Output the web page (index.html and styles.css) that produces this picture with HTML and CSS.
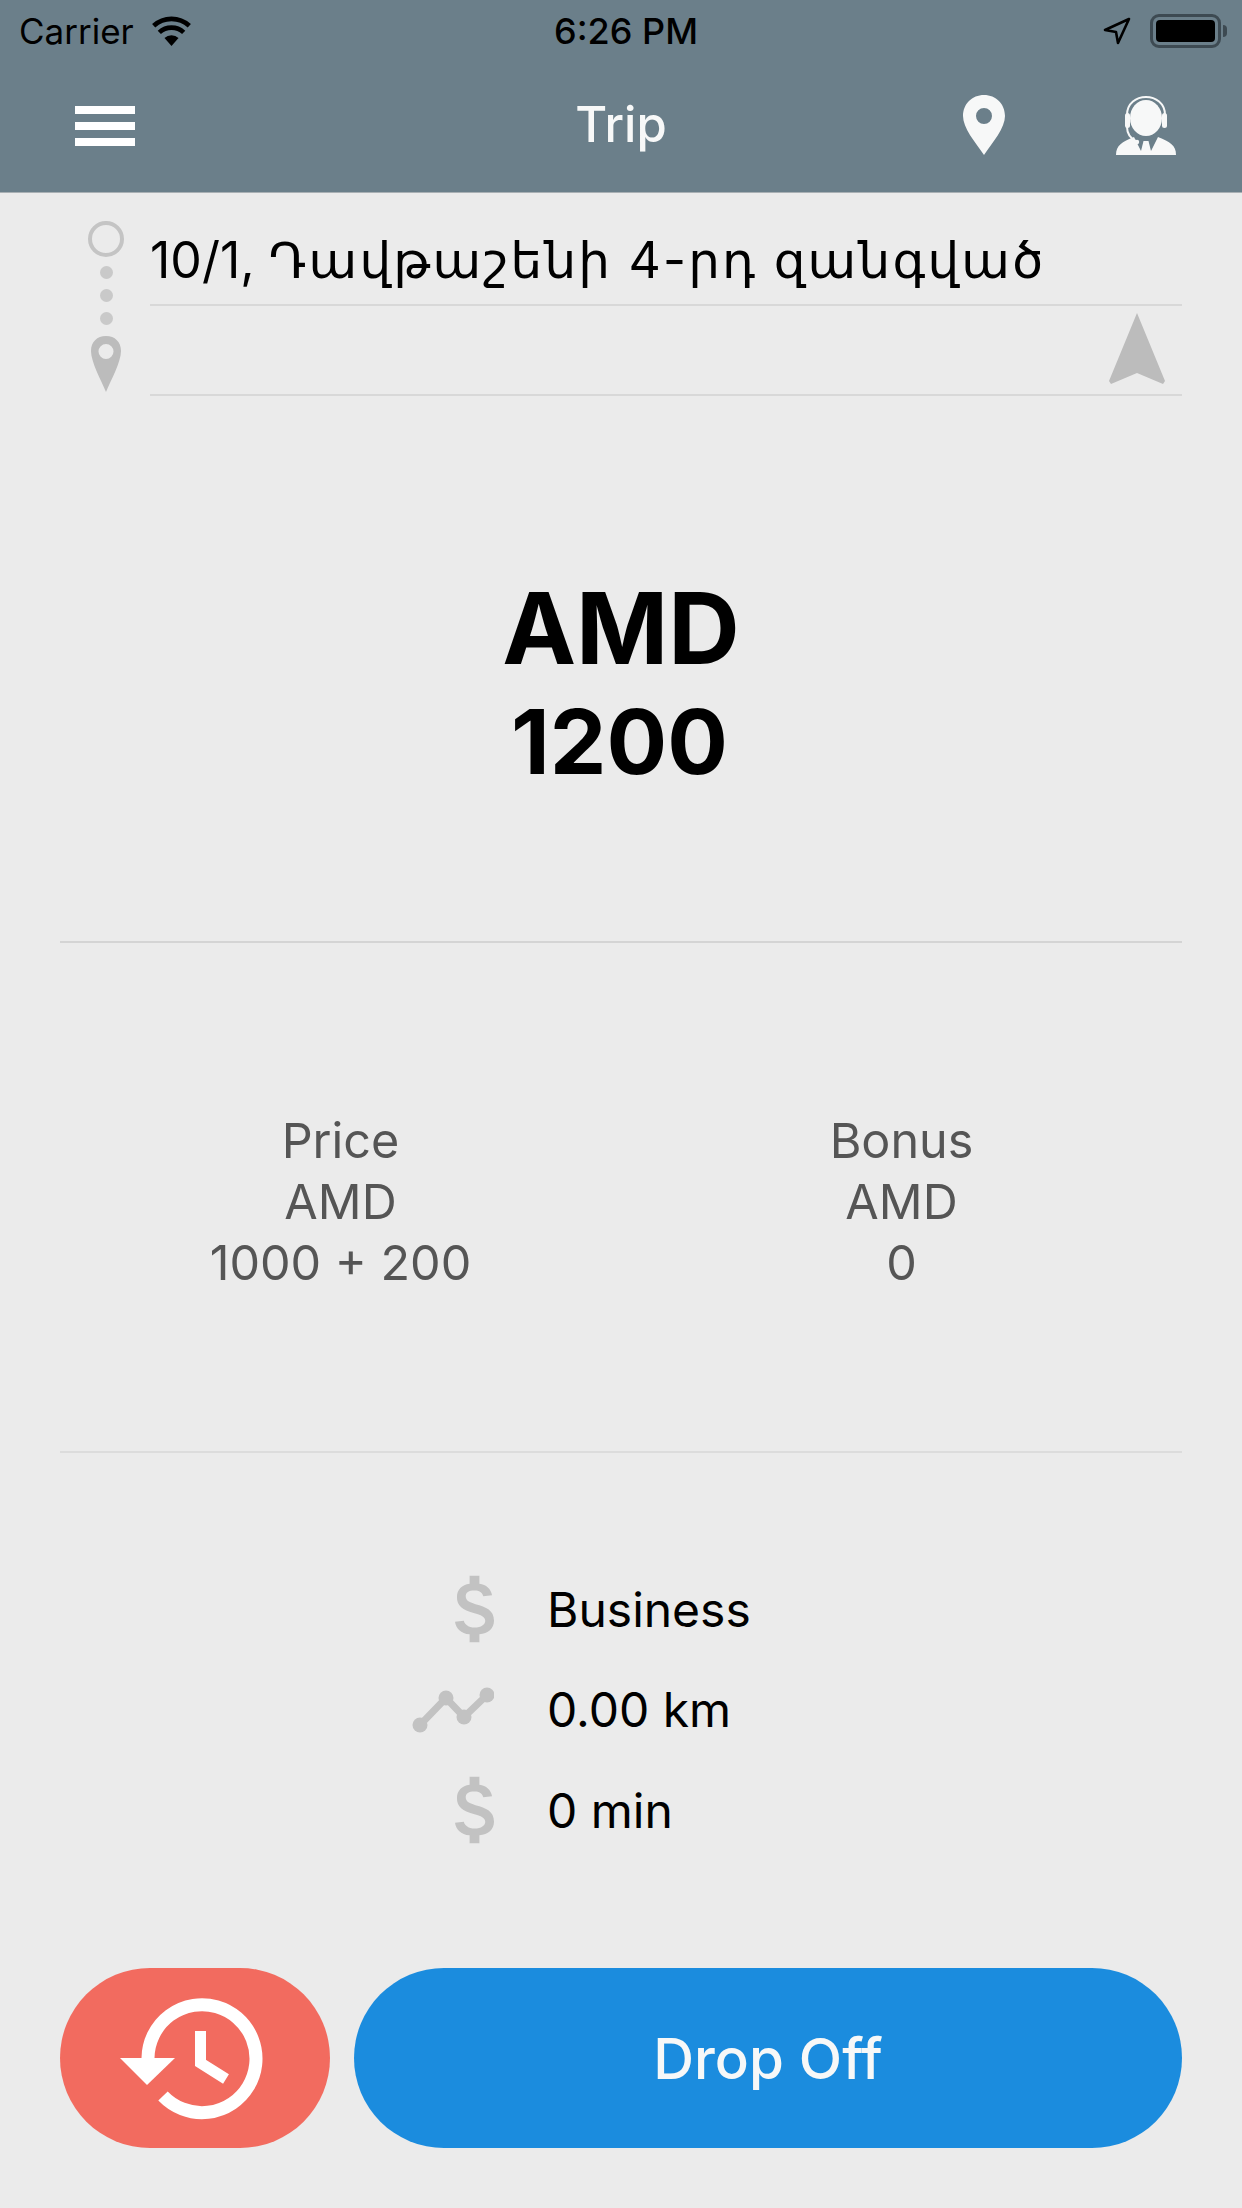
FILE: index.html
```html
<!DOCTYPE html>
<html lang="en">
  <head>
    <meta charset="utf-8">
    <link rel="stylesheet" href="styles.css">
    <title>Trip</title>
  </head>
  <body>
    <div class="screen">
      <div class="header">
        <div class="status-bar">
          <div class="status-left">
            <span>Carrier</span>
            <svg class="wifi" viewBox="0 0 44 32">
              <path d="M22 32 L14.5 23.5 A11 11 0 0 1 29.5 23.5 Z" fill="#000"/>
              <path d="M9 17.5 A19 19 0 0 1 35 17.5" fill="none" stroke="#000" stroke-width="5"/>
              <path d="M3 10.5 A28 28 0 0 1 41 10.5" fill="none" stroke="#000" stroke-width="5"/>
            </svg>
          </div>
          <div class="status-time">6:26 PM</div>
          <div class="status-right">
            <svg class="location" viewBox="0 0 28 28">
              <path d="M26 2 L2 13 L13 15 L15 26 Z" fill="none" stroke="#000" stroke-width="2.6" stroke-linejoin="round"/>
            </svg>
            <div class="battery"><div class="battery-fill"></div></div>
            <div class="battery-nub"></div>
          </div>
        </div>
        <div class="nav-bar">
          <div class="menu-icon"><i></i><i></i><i></i></div>
          <div class="nav-title">Trip</div>
          <svg class="nav-pin" viewBox="0 0 42 60">
            <path fill-rule="evenodd" d="M21 0 C33 0 42 9 42 21 C42 33 30 47 21 60 C12 47 0 33 0 21 C0 9 9 0 21 0 Z M21 13 A8 8 0 1 0 21 29 A8 8 0 1 0 21 13 Z" fill="#f7f8f8"/>
          </svg>
          <svg class="nav-agent" viewBox="0 0 60 60">
            <path d="M11 20 C11 -4 49 -4 49 20" fill="none" stroke="#f7f8f8" stroke-width="2"/>
            <ellipse cx="30" cy="23" rx="16" ry="18" fill="#f7f8f8"/>
            <rect x="9" y="18" width="5" height="15" rx="2.5" fill="#f7f8f8"/>
            <rect x="46" y="18" width="5" height="15" rx="2.5" fill="#f7f8f8"/>
            <path d="M11 32 C11 40 15 44 21 47" fill="none" stroke="#f7f8f8" stroke-width="2"/>
            <circle cx="21" cy="47" r="2.2" fill="#f7f8f8"/>
            <path d="M0 60 C0 50 6 47 18 42 L25 56 L27.5 46 L32.5 46 L35 56 L42 42 C54 47 60 50 60 60 Z" fill="#f7f8f8"/>
          </svg>
        </div>
      </div>

      <div class="route">
        <div class="route-marks">
          <div class="mark-circle"></div>
          <div class="mark-dot"></div>
          <div class="mark-dot"></div>
          <div class="mark-dot"></div>
          <svg class="mark-pin" viewBox="0 0 30 56">
            <path fill-rule="evenodd" d="M15 0 C24 0 30 6 30 15 C30 26 20 44 15 56 C10 44 0 26 0 15 C0 6 6 0 15 0 Z M15 8 A7.5 7.5 0 1 0 15 23 A7.5 7.5 0 1 0 15 8 Z" fill="#bcbcbc"/>
          </svg>
        </div>
        <div class="route-fields">
          <div class="field field-from">10/1, <span class="field-street">Դավթաշենի 4-րդ զանգված</span></div>
          <div class="field field-to">
            <svg class="nav-arrow" viewBox="0 0 56 72">
              <path d="M28 0 L56 68 L54 71 L28 60 L2 71 L0 68 Z" fill="#bcbcbc"/>
            </svg>
          </div>
        </div>
      </div>

      <div class="amount">
        <div class="amount-currency">AMD</div>
        <div class="amount-value">1200</div>
      </div>

      <div class="fare">
        <div class="fare-col">
          <div>Price</div>
          <div>AMD</div>
          <div>1000 + 200</div>
        </div>
        <div class="fare-col">
          <div>Bonus</div>
          <div>AMD</div>
          <div>0</div>
        </div>
      </div>

      <div class="info">
        <div class="info-row">
          <svg class="icon-dollar" viewBox="0 0 40 68">
            <path d="M15 0 H25 V8 C32 9 37 13 38 20 L29 21 C28 17 25 15 20 15 C14 15 11 17 11 21 C11 25 14 27 21 29 C32 32 40 35 40 46 C40 54 34 59 25 60 V68 H15 V60 C6 59 1 54 0 47 L9 46 C10 50 14 53 20 53 C27 53 31 50 31 46 C31 42 27 40 19 38 C8 35 2 31 2 22 C2 14 7 9 15 8 Z" fill="#c2c2c2"/>
          </svg>
          <span>Business</span>
        </div>
        <div class="info-row">
          <svg class="icon-route" viewBox="0 0 82 46">
            <polyline points="8,38 34,11 52,30 75,8" fill="none" stroke="#c2c2c2" stroke-width="7"/>
            <circle cx="8" cy="38" r="7.5" fill="#c2c2c2"/>
            <circle cx="34" cy="11" r="7.5" fill="#c2c2c2"/>
            <circle cx="52" cy="30" r="7.5" fill="#c2c2c2"/>
            <circle cx="75" cy="8" r="7.5" fill="#c2c2c2"/>
          </svg>
          <span>0.00 km</span>
        </div>
        <div class="info-row">
          <svg class="icon-dollar" viewBox="0 0 40 68">
            <path d="M15 0 H25 V8 C32 9 37 13 38 20 L29 21 C28 17 25 15 20 15 C14 15 11 17 11 21 C11 25 14 27 21 29 C32 32 40 35 40 46 C40 54 34 59 25 60 V68 H15 V60 C6 59 1 54 0 47 L9 46 C10 50 14 53 20 53 C27 53 31 50 31 46 C31 42 27 40 19 38 C8 35 2 31 2 22 C2 14 7 9 15 8 Z" fill="#c2c2c2"/>
          </svg>
          <span>0 min</span>
        </div>
      </div>

      <div class="actions">
        <div class="btn btn-history">
          <svg class="history-icon" viewBox="0 0 150 124">
            <path d="M28 62 A54 54 0 1 1 43 100" fill="none" stroke="#fff" stroke-width="13"/>
            <path d="M0 62 H55 L27 89 Z" fill="#fff"/>
            <path d="M80.5 35 V67 L106 83" fill="none" stroke="#fff" stroke-width="11"/>
          </svg>
        </div>
        <div class="btn btn-drop">Drop Off</div>
      </div>
    </div>
  </body>
</html>
```

FILE: styles.css
```css
html, body{
  margin: 0;
  padding: 0;
}
body{
  background-color: #ebebeb;
  font-family: Inter, 'Noto Sans', 'DejaVu Sans', sans-serif;
  color: #000;
}
.screen{
  width: 1242px;
  height: 2208px;
  display: flex;
  flex-direction: column;
  overflow: hidden;
}

/* HEADER */
.header{
  height: 192px;
  background-color: #6b7f8a;
  border-bottom: 1px solid #a9b0b4;
}
.status-bar{
  height: 62px;
  display: grid;
  grid-template-columns: 1fr auto 1fr;
  align-items: center;
  padding: 0 15px 0 19px;
  font-size: 35px;
}
.status-left{
  display: flex;
  align-items: center;
  gap: 16px;
}
.wifi{
  width: 43px;
  height: 30px;
}
.status-time{
  margin-left: 6px;
  font-size: 36px;
  font-weight: 500;
}
.status-right{
  display: flex;
  align-items: center;
  justify-content: flex-end;
}
.location{
  width: 28px;
  height: 28px;
  margin-right: 19px;
}
.battery{
  width: 71px;
  height: 34px;
  box-sizing: border-box;
  border: 3px solid #3d4a52;
  border-radius: 9px;
  padding: 3px;
}
.battery-fill{
  height: 100%;
  background-color: #000;
  border-radius: 4px;
}
.battery-nub{
  width: 4px;
  height: 12px;
  margin-left: 2px;
  background-color: #3d4a52;
  border-radius: 0 4px 4px 0;
}
.nav-bar{
  height: 130px;
  display: flex;
  align-items: flex-start;
  padding: 33px 66px 0 75px;
}
.menu-icon{
  width: 60px;
  margin-top: 11px;
  display: flex;
  flex-direction: column;
  gap: 8px;
}
.menu-icon i{
  display: block;
  height: 8px;
  background-color: #fff;
}
.nav-title{
  flex: 1;
  padding-left: 144px;
  text-align: center;
  font-size: 49px;
  font-weight: 500;
  line-height: 60px;
  color: #f7f8f8;
}
.nav-pin{
  width: 42px;
  height: 60px;
}
.nav-agent{
  width: 60px;
  height: 60px;
  margin-left: 111px;
}

/* ROUTE */
.route{
  display: flex;
  padding: 0 60px 0 88px;
  gap: 26px;
}
.route-marks{
  width: 36px;
  padding-top: 28px;
  display: flex;
  flex-direction: column;
  align-items: center;
}
.mark-circle{
  width: 36px;
  height: 36px;
  box-sizing: border-box;
  border: 4px solid #c4c4c4;
  border-radius: 50%;
  margin-bottom: 9px;
}
.mark-dot{
  width: 13px;
  height: 13px;
  border-radius: 50%;
  background-color: #c9c9c9;
  margin-bottom: 10px;
}
.mark-pin{
  width: 30px;
  height: 56px;
  margin-top: 1px;
}
.route-fields{
  flex: 1;
}
.field{
  border-bottom: 2px solid #d8d8d8;
  box-sizing: border-box;
}
.field-from{
  height: 113px;
  padding-top: 40px;
  font-family: Inter, 'DejaVu Sans', sans-serif;
  font-size: 50px;
  line-height: 54px;
  white-space: nowrap;
}
.field-street{
  letter-spacing: 2.2px;
}
.field-to{
  height: 90px;
  display: flex;
  justify-content: flex-end;
  padding: 7px 17px 0 0;
}
.nav-arrow{
  width: 56px;
  height: 72px;
}

/* AMOUNT */
.amount{
  margin: 0 60px;
  height: 547px;
  box-sizing: border-box;
  border-bottom: 2px solid #d4d4d4;
  padding-top: 176px;
  text-align: center;
  font-weight: 700;
  line-height: 112px;
}
.amount-currency{
  font-size: 99px;
}
.amount-value{
  font-size: 90px;
  margin-top: 2px;
  padding-right: 3px;
}

/* FARE */
.fare{
  margin: 0 60px;
  height: 510px;
  box-sizing: border-box;
  border-bottom: 2px solid #dcdcdc;
  padding-top: 167px;
  display: grid;
  grid-template-columns: 1fr 1fr;
  text-align: center;
  font-size: 48.5px;
  line-height: 61px;
  color: #555;
}

/* INFO */
.info{
  padding-top: 106px;
  display: flex;
  flex-direction: column;
}
.info-row{
  height: 100.5px;
  display: grid;
  grid-template-columns: 494px auto;
  column-gap: 53px;
  align-items: center;
  justify-items: end;
  font-size: 48px;
}
.info-row span{
  justify-self: start;
}
.icon-dollar{
  width: 39px;
  height: 68px;
}
.icon-route{
  width: 82px;
  height: 46px;
}

/* BUTTONS */
.actions{
  margin-top: auto;
  padding: 0 60px 60px;
  display: flex;
  gap: 24px;
}
.btn{
  height: 180px;
  border-radius: 90px;
  display: flex;
  justify-content: center;
  align-items: center;
}
.btn-history{
  width: 270px;
  background-color: #f26b5f;
}
.history-icon{
  width: 150px;
  height: 124px;
}
.btn-drop{
  flex: 1;
  background-color: #1b8cde;
  color: #f7f8f8;
  font-size: 56.5px;
  font-weight: 500;
}
```
